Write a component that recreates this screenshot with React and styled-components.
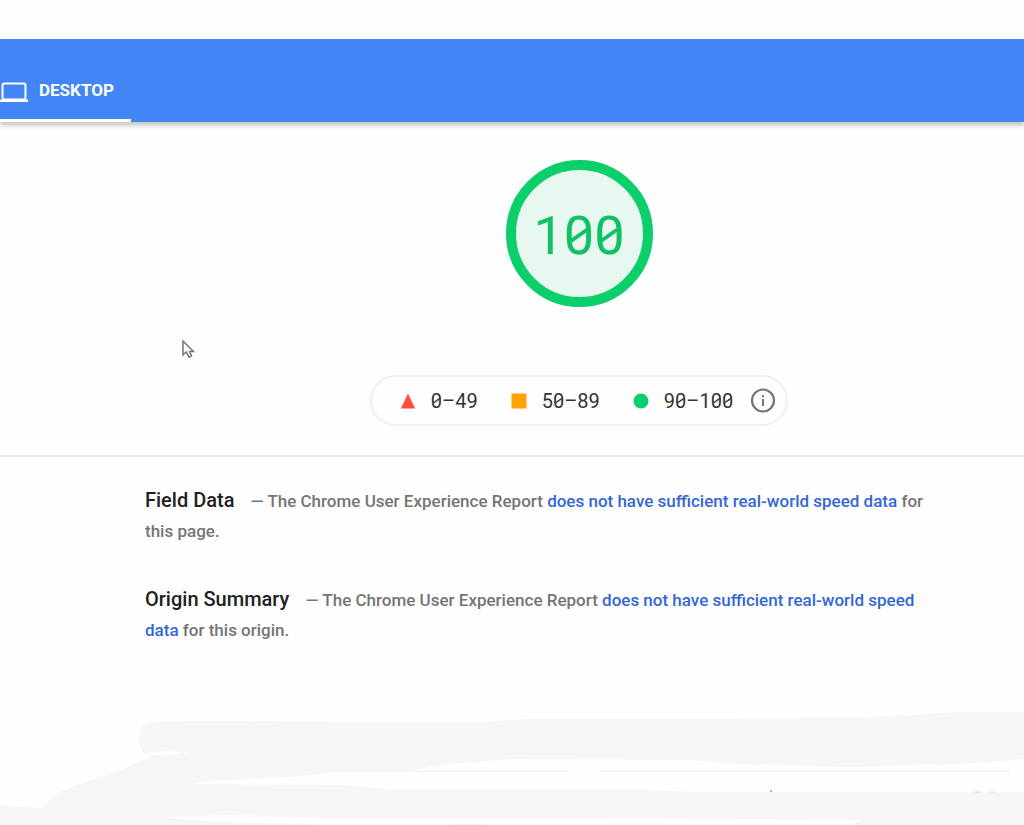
import React from "react";
import styled, { createGlobalStyle } from "styled-components";

const ranges = [
  { label: "0–49", shape: "triangle" },
  { label: "50–89", shape: "square" },
  { label: "90–100", shape: "circle" },
];

const reports = [
  { title: "Field Data", target: "page" },
  { title: "Origin Summary", target: "origin" },
];

function LaptopIcon() {
  return (
    <svg width="28" height="26" viewBox="0 0 28 26" fill="none" aria-hidden="true">
      <rect x="2.5" y="6.5" width="23" height="16" rx="2" stroke="#fff" strokeWidth="2" />
      <path d="M0 22.5h28V25H0z" fill="#fff" />
    </svg>
  );
}

function Marker({ shape }) {
  return (
    <svg width="16" height="16" viewBox="0 0 16 16" aria-hidden="true">
      {shape === "triangle" && <path d="M8 0.5 15.2 15.5H0.8z" fill="#ff4e42" />}
      {shape === "square" && <rect x="0.5" y="0.5" width="15" height="15" fill="#ffa400" />}
      {shape === "circle" && <circle cx="8" cy="8" r="7.5" fill="#0cce6b" />}
    </svg>
  );
}

function InfoIcon() {
  return (
    <svg width="26" height="26" viewBox="0 0 26 26" fill="none" aria-hidden="true">
      <circle cx="13" cy="12.5" r="11" stroke="#757575" strokeWidth="2.2" />
      <path d="M13 11v7M13 7v2.2" stroke="#757575" strokeWidth="2" />
    </svg>
  );
}

// Numbers are set with slashed zeros
function Digits({ value }) {
  return (
    <span>
      {value.split("").map((char, index) =>
        char === "0" ? (
          <Zero key={index}>
            0
            <Slash viewBox="0 0 56 100" preserveAspectRatio="none" aria-hidden="true">
              <path d="M13 59 43 38" stroke="currentColor" strokeWidth="7" />
            </Slash>
          </Zero>
        ) : (
          char
        )
      )}
    </span>
  );
}

function Brush() {
  return (
    <BrushArt viewBox="0 0 1024 120" preserveAspectRatio="none" aria-hidden="true">
      <path
        fill="#f6f6f6"
        d="M152 16C190 15 220 15 340 16H490Q505 14 530 13H690L860 12 960 6H1024V120H0V100L40 102C50 100 45 94 59 86L130 60 152 50C143 48 139 43 139 34C139 23 143 17 152 16Z"
      />
      <g fill="#fefefe">
        <path d="M144 48 165 45 190 47 165 49 148 49Z" />
        <path d="M193 77Q240 72 290 71L340 66H400L450 58 510 53 690 54 735 58 850 61 960 58 1024 53V86H700L640 84H390Q370 80 340 79L193 78Z" />
        <path d="M160 111 230 109 330 112H560L860 114 850 120H490L340 119 220 116Z" />
      </g>
      <path d="M360 65H568M600 65H1010" stroke="#f6f6f6" strokeWidth="2" />
      <path d="M450 119H486" stroke="#f3f3f3" strokeWidth="2" />
      <circle cx="771" cy="85" r="1" fill="#999" />
      <path d="M974 86h6M990 86h5" stroke="#ddd" />
    </BrushArt>
  );
}

export default function App() {
  return (
    <Page>
      <GlobalStyle />
      <Header>
        <Tab type="button">
          <LaptopIcon />
          Desktop
        </Tab>
      </Header>
      <main>
        <Score>
          <Gauge>
            <Digits value="100" />
          </Gauge>
          <Scale>
            {ranges.map((range) => (
              <Range key={range.label}>
                <Marker shape={range.shape} />
                <Digits value={range.label} />
              </Range>
            ))}
            <InfoButton type="button" aria-label="Score information">
              <InfoIcon />
            </InfoButton>
          </Scale>
        </Score>
        <Reports>
          {reports.map((report) => (
            <Report key={report.title}>
              <Title>{report.title}</Title>— The Chrome User Experience Report{" "}
              <Link href="#speed-data">
                does not have sufficient real-world speed data
              </Link>{" "}
              for this {report.target}.
            </Report>
          ))}
        </Reports>
      </main>
      <Brush />
      <Cursor viewBox="0 0 14 20" aria-hidden="true">
        <path
          d="M2 2V16L5.2 13 8 18.2 10.5 17 8.5 12.5H12.5Z"
          fill="#fff"
          stroke="#777"
          strokeWidth="1.5"
        />
      </Cursor>
    </Page>
  );
}

const GlobalStyle = createGlobalStyle`
  * {
    box-sizing: border-box;
  }
  body {
    margin: 0;
    background: #fefefe;
    font-family: Roboto, "Liberation Sans", sans-serif;
  }
`;

const Page = styled.div`
  position: relative;
  padding-top: 39px;
  overflow: hidden;
`;

const Header = styled.header`
  display: flex;
  height: 83px;
  background: #4285f4;
  box-shadow: 0 4px 4px rgba(0, 0, 0, 0.2);
`;

const Tab = styled.button`
  display: flex;
  align-items: center;
  gap: 11px;
  padding: 22px 17px 0 0;
  border: 0;
  border-bottom: 3px solid #fff;
  background: none;
  color: #fff;
  font-family: inherit;
  font-size: 17px;
  font-weight: 700;
  text-transform: uppercase;
`;

const Score = styled.section`
  display: flex;
  flex-direction: column;
  align-items: center;
  gap: 68px;
  padding: 38px 11px 29px 145px;
  border-bottom: 2px solid #e8e8e8;
`;

const Gauge = styled.div`
  display: flex;
  align-items: center;
  justify-content: center;
  width: 147px;
  height: 147px;
  padding-top: 4px;
  border: 10px solid #0cce6b;
  border-radius: 50%;
  background: #e7f8f0;
  color: #12c065;
  font-size: 54px;
  line-height: 1;
`;

const Scale = styled.div`
  display: flex;
  align-items: center;
  height: 51px;
  padding: 1px 10px 0 28px;
  border: 2px solid #f0f0f0;
  border-radius: 26px;
`;

const Range = styled.span`
  display: flex;
  align-items: center;
  gap: 15px;
  margin-right: 33px;
  color: #333;
  font-size: 20px;
  line-height: 1;

  &:nth-last-child(2) {
    margin-right: 17px;
  }
`;

const Zero = styled.span`
  display: inline-block;
  position: relative;
`;

const Slash = styled.svg`
  position: absolute;
  inset: 0;
  width: 100%;
  height: 100%;
`;

const InfoButton = styled.button`
  display: flex;
  padding: 0;
  border: 0;
  background: none;
`;

const Reports = styled.section`
  display: flex;
  flex-direction: column;
  gap: 38px;
  padding: 28px 83px 61px 145px;
`;

const Report = styled.p`
  margin: 0;
  color: #757575;
  font-size: 17px;
  font-weight: 500;
  line-height: 30px;
`;

const Title = styled.strong`
  margin-right: 16px;
  color: #212121;
  font-size: 20px;
  font-weight: 500;
`;

const Link = styled.a`
  color: #3367d6;
  text-decoration: none;
`;

const BrushArt = styled.svg`
  display: block;
  width: 100%;
  height: 120px;
`;

const Cursor = styled.svg`
  position: absolute;
  top: 339px;
  left: 181px;
  width: 14px;
  height: 20px;
`;
